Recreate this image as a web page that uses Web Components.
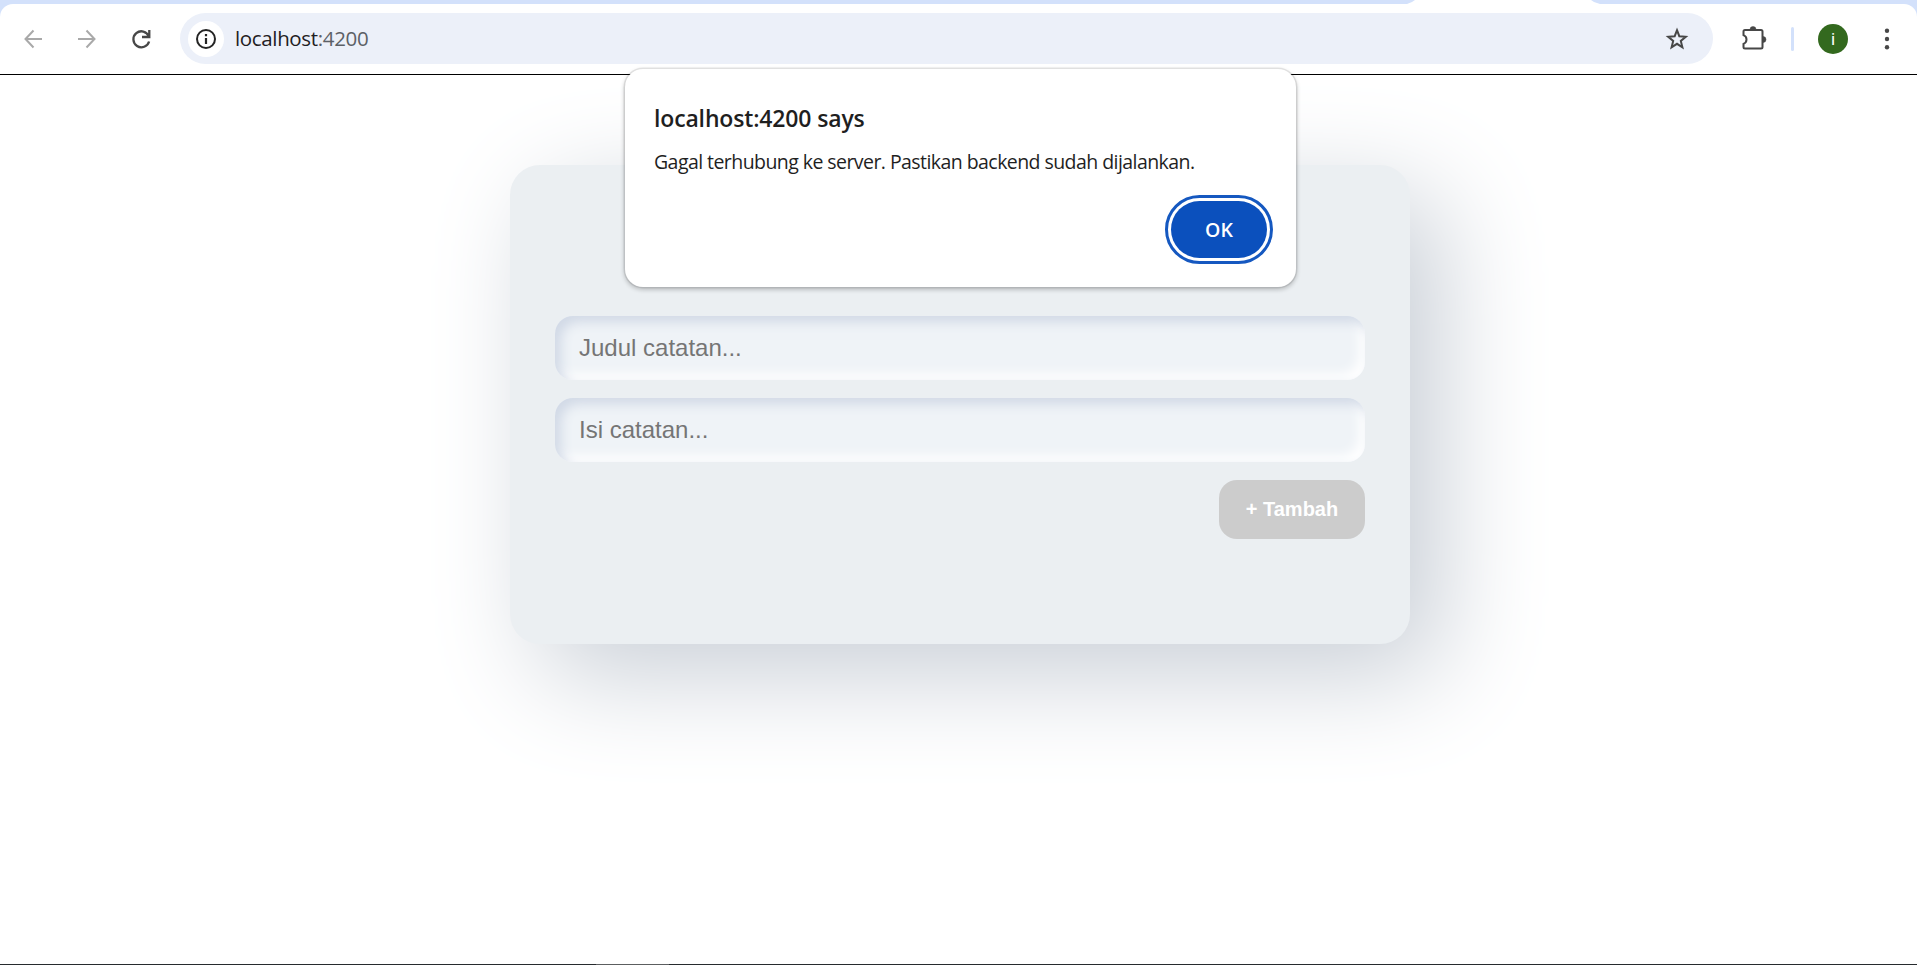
<!DOCTYPE html>
<html lang="id">
<head>
<meta charset="utf-8">
<title>localhost:4200</title>
<style>
html,body{margin:0;height:100%;background:#fff;overflow:hidden}
body{font-family:"Liberation Sans",Arial,sans-serif}
</style>
</head>
<body>
<browser-window>
  <tool-bar slot="toolbar" host="localhost" port=":4200" initial="i"></tool-bar>
  <note-card>
    <note-field>Judul catatan...</note-field>
    <note-field>Isi catatan...</note-field>
    <add-button slot="action">+ Tambah</add-button>
  </note-card>
  <alert-dialog slot="dialog">
    <span slot="title">localhost:4200 says</span>
    Gagal terhubung ke server. Pastikan backend sudah dijalankan.
    <span slot="confirm">OK</span>
  </alert-dialog>
</browser-window>
<script>
const define = (name, html) => customElements.define(name, class extends HTMLElement {
  constructor() {
    super();
    this.attachShadow({mode: 'open'}).innerHTML =
      html.replace(/\{(\w+)\}/g, (_, key) => this.getAttribute(key) || '');
  }
});

define('browser-window', `<style>
:host{display:flex;flex-direction:column;height:965px;position:relative;background:#fff;overflow:hidden}
.tabs{height:4px;background:#d3e1fb;flex:none;display:flex;justify-content:flex-end}
.tab{width:193px;height:4px;margin-right:317px;background:#fff;clip-path:polygon(8px 0,184px 0,187px 2px,193px 4px,0 4px,5px 2px)}
.bar{background:#d3e1fb;flex:none}
main{flex:1;border-top:1px solid #000;display:flex;justify-content:center;align-items:flex-start;padding:90px 0 0 3px;overflow:hidden;box-sizing:border-box}
footer{height:1px;flex:none;background:linear-gradient(90deg,#272b2e 596px,#5c5e60 596px 669px,#272b2e 669px)}
</style>
<div class="tabs"><div class="tab"></div></div>
<div class="bar"><slot name="toolbar"></slot></div>
<main><slot></slot></main><footer></footer><slot name="dialog"></slot>`);

define('tool-bar', `<style>
:host{display:flex;align-items:center;height:70px;padding-bottom:1px;background:#fff;border-radius:13px 13px 0 0;box-sizing:border-box;font-family:"Open Sans","Noto Sans",sans-serif}
svg{display:block;flex:none}
.nav{display:flex;gap:30px;margin-left:21px}
.omni{display:flex;align-items:center;width:1533px;height:51px;box-sizing:border-box;padding:0 24px 0 8px;border-radius:26px;background:#ecf0f9;margin-left:27px}
.info{width:36px;height:36px;border-radius:50%;background:#fff;display:grid;place-items:center}
.url{flex:1;margin-left:11px;font-size:20.5px;letter-spacing:-.35px;line-height:30px;margin-top:-1px;color:#5c6066;white-space:nowrap}
.url b{font-weight:400;color:#1f2023}
.ext{margin-left:28px}
.sep{width:3px;height:24px;border-radius:2px;background:#d3e1fb;margin-left:24px}
.who{width:30px;height:30px;border-radius:50%;background:#33691e;color:#fff;font:17px/30px Roboto,sans-serif;text-align:center;margin-left:24px}
.more{margin-left:35px}
</style>
<div class="nav">
<svg width="24" height="24" viewBox="0 0 24 24" fill="none" stroke="#a9a9a9" stroke-width="2"><path d="M21 12H5M12.5 3.5 4.5 12l8 8.500"/></svg>
<svg width="24" height="24" viewBox="0 0 24 24" fill="none" stroke="#a9a9a9" stroke-width="2"><path d="M3 12h16M11.500 3.500l8 8.500-8 8.500"/></svg>
<svg width="24" height="24" viewBox="0 0 24 24" fill="none" stroke="#474747" stroke-width="2.300"><path d="M19.800 9.200A8 8 0 1 0 20.100 14.500M20.300 3v7H13"/></svg>
</div>
<div class="omni">
<div class="info"><svg width="22" height="22" viewBox="0 0 22 22"><circle cx="11" cy="11" r="9" fill="none" stroke="#242424" stroke-width="2"/><path d="M11 10v6M11 6v2.200" stroke="#242424" stroke-width="2.200"/></svg></div>
<div class="url"><b>{host}</b>{port}</div>
<svg width="24" height="24" viewBox="0 0 24 24" fill="none" stroke="#474747" stroke-width="2"><path d="m12 3.200 2.300 6 6.500.5-5 4.200 1.600 6.400-5.400-3.500-5.400 3.500 1.600-6.400-5-4.200 6.500-.5z"/></svg>
</div>
<svg class="ext" width="26" height="28" viewBox="0 0 26 28"><path d="M4 5h16q1.500 0 1.500 1.500v15.500q0 1.500-1.500 1.500H4q-1.500 0-1.500-1.500v-3.200q3-1.300 3-4.300t-3-4.300V6.500q0-1.500 1.500-1.500z" fill="none" stroke="#474747" stroke-width="2"/><path d="M9 4.500a3 3 0 0 1 6 0zM22 11.500a3 3 0 0 1 0 6z" fill="#474747" stroke="#474747" stroke-width=".5"/></svg>
<div class="sep"></div><div class="who">{initial}</div>
<svg class="more" width="8" height="24" viewBox="0 0 8 24" fill="#474747"><circle cx="4" cy="3.700" r="2.200"/><circle cx="4" cy="12" r="2.200"/><circle cx="4" cy="20.300" r="2.200"/></svg>`);

define('note-card', `<style>
:host{display:flex;flex-direction:column;gap:18px;width:900px;height:479px;box-sizing:border-box;padding:151px 45px 0;border-radius:30px;background:#ebeff2;box-shadow:30px 30px 108px #c8ced6}
.action{display:flex;justify-content:flex-end}
</style><slot></slot><div class="action"><slot name="action"></slot></div>`);

define('note-field', `<style>
:host{display:flex;align-items:center;height:64px;box-sizing:border-box;padding:0 24px;border-radius:18px;background:#eff3f7;box-shadow:inset 6px 6px 12px #d1d9e6,inset -6px -6px 12px #fff;color:#757575;font-size:24px}
</style><slot></slot>`);

define('add-button', `<style>
:host{display:grid;place-items:center;width:146px;height:59px;border-radius:18px;background:#ccc;color:#fff;font-size:20px;font-weight:700;white-space:nowrap}
</style><slot></slot>`);

define('alert-dialog', `<style>
:host{position:absolute;left:625px;top:69px;width:671px;height:218px;box-sizing:border-box;border-radius:18px;background:#fff;box-shadow:0 0 0 1.500px rgba(0,0,0,.08),0 2px 4px 1px rgba(0,0,0,.2);padding:32px 23px 0 29px;font-family:"Open Sans","Noto Sans",sans-serif;color:#1f1f1f;display:flex;flex-direction:column}
h1{margin:0;font-size:23px;line-height:34px;font-weight:600;letter-spacing:-.15px}
p{margin:12px 0 0;font-size:19.500px;line-height:30px;letter-spacing:-.56px;white-space:nowrap}
.row{display:flex;justify-content:flex-end;margin-top:18px}
button{width:108px;height:69px;border:3px solid #1558c0;border-radius:35px;padding:3px;background:#fff}
button span{display:grid;place-items:center;height:57px;border-radius:29px;background:#0b50bd;color:#fff;font:600 19.500px "Open Sans",sans-serif}
</style><h1><slot name="title"></slot></h1><p><slot></slot></p>
<div class="row"><button><span><slot name="confirm"></slot></span></button></div>`);
</script>
</body>
</html>
